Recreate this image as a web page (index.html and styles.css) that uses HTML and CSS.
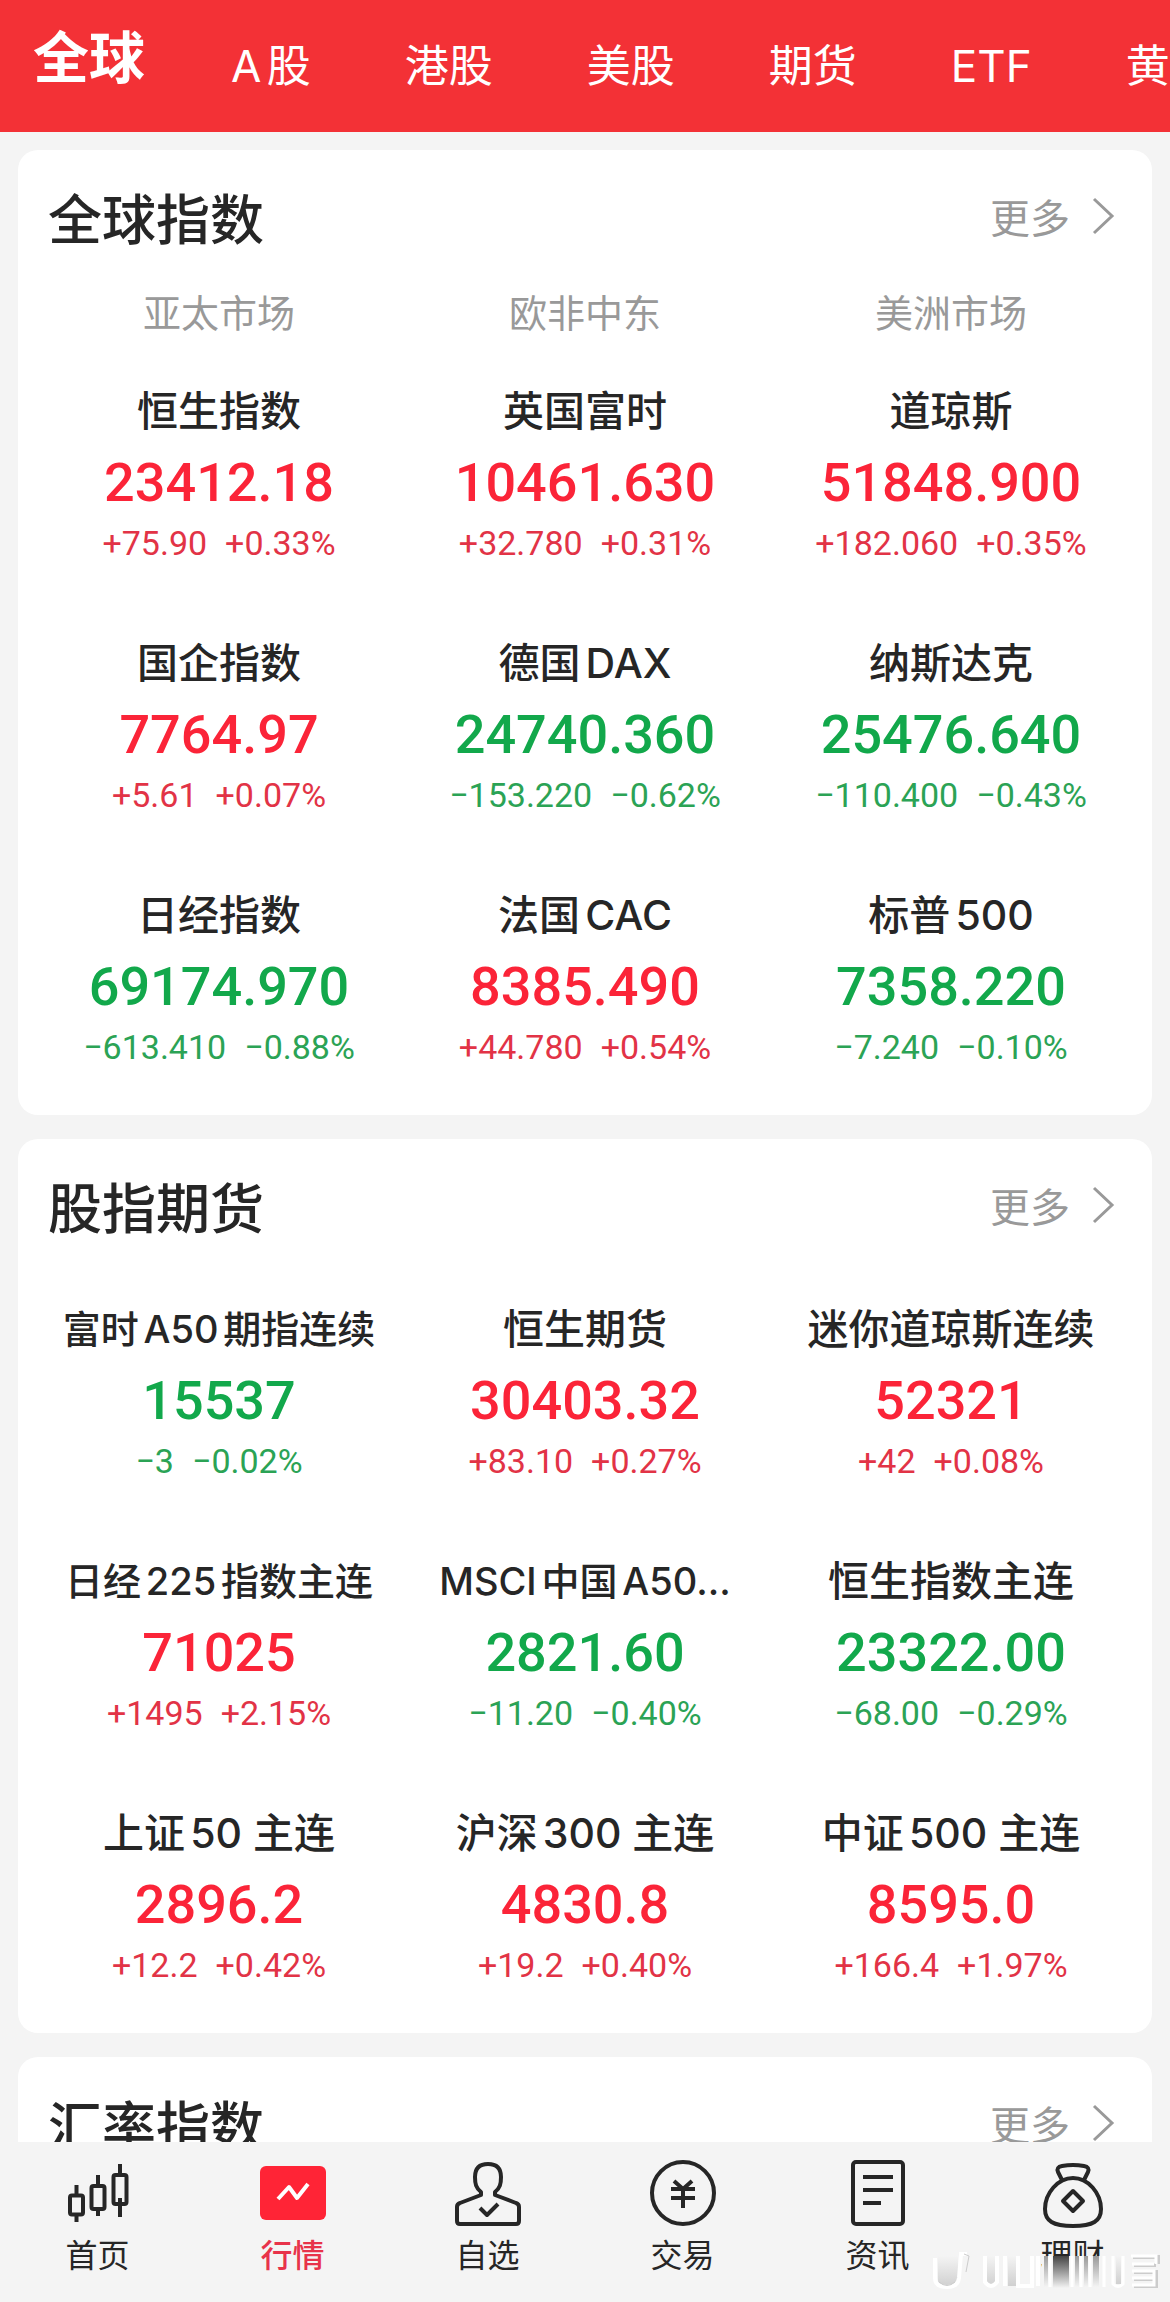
FILE: index.html
```html
<!DOCTYPE html>
<html lang="zh-CN">
  <head>
    <meta charset="UTF-8">
    <meta name="viewport" content="width=device-width, initial-scale=1.0">
    <title>全球行情</title>
    <link rel="stylesheet" href="styles.css">
  </head>
  <body>
    <nav class="top-nav">
      <a class="active" href="#">全球</a>
      <a href="#">A股</a>
      <a href="#">港股</a>
      <a href="#">美股</a>
      <a href="#">期货</a>
      <a href="#">ETF</a>
      <a href="#">黄金</a>
    </nav>

    <main>
      <!-- 全球指数 -->
      <section class="card">
        <header>
          <h2>全球指数</h2>
          <a class="more" href="#">更多
            <svg viewBox="0 0 24 42"><path d="M2 4l18 17L2 38"/></svg>
          </a>
        </header>
        <div class="markets">
          <span>亚太市场</span>
          <span>欧非中东</span>
          <span>美洲市场</span>
        </div>
        <div class="grid">
          <div class="item up">
            <h3>恒生指数</h3>
            <strong>23412.18</strong>
            <p><span>+75.90</span><span>+0.33%</span></p>
          </div>
          <div class="item up">
            <h3>英国富时</h3>
            <strong>10461.630</strong>
            <p><span>+32.780</span><span>+0.31%</span></p>
          </div>
          <div class="item up">
            <h3>道琼斯</h3>
            <strong>51848.900</strong>
            <p><span>+182.060</span><span>+0.35%</span></p>
          </div>
          <div class="item up">
            <h3>国企指数</h3>
            <strong>7764.97</strong>
            <p><span>+5.61</span><span>+0.07%</span></p>
          </div>
          <div class="item down">
            <h3>德国DAX</h3>
            <strong>24740.360</strong>
            <p><span>−153.220</span><span>−0.62%</span></p>
          </div>
          <div class="item down">
            <h3>纳斯达克</h3>
            <strong>25476.640</strong>
            <p><span>−110.400</span><span>−0.43%</span></p>
          </div>
          <div class="item down">
            <h3>日经指数</h3>
            <strong>69174.970</strong>
            <p><span>−613.410</span><span>−0.88%</span></p>
          </div>
          <div class="item up">
            <h3>法国CAC</h3>
            <strong>8385.490</strong>
            <p><span>+44.780</span><span>+0.54%</span></p>
          </div>
          <div class="item down">
            <h3>标普500</h3>
            <strong>7358.220</strong>
            <p><span>−7.240</span><span>−0.10%</span></p>
          </div>
        </div>
      </section>

      <!-- 股指期货 -->
      <section class="card">
        <header>
          <h2>股指期货</h2>
          <a class="more" href="#">更多
            <svg viewBox="0 0 24 42"><path d="M2 4l18 17L2 38"/></svg>
          </a>
        </header>
        <div class="grid futures">
          <div class="item down">
            <h3 class="long">富时A50期指连续</h3>
            <strong>15537</strong>
            <p><span>−3</span><span>−0.02%</span></p>
          </div>
          <div class="item up">
            <h3>恒生期货</h3>
            <strong>30403.32</strong>
            <p><span>+83.10</span><span>+0.27%</span></p>
          </div>
          <div class="item up">
            <h3>迷你道琼斯连续</h3>
            <strong>52321</strong>
            <p><span>+42</span><span>+0.08%</span></p>
          </div>
          <div class="item up">
            <h3 class="long">日经225指数主连</h3>
            <strong>71025</strong>
            <p><span>+1495</span><span>+2.15%</span></p>
          </div>
          <div class="item down">
            <h3 class="long">MSCI中国A50...</h3>
            <strong>2821.60</strong>
            <p><span>−11.20</span><span>−0.40%</span></p>
          </div>
          <div class="item down">
            <h3>恒生指数主连</h3>
            <strong>23322.00</strong>
            <p><span>−68.00</span><span>−0.29%</span></p>
          </div>
          <div class="item up">
            <h3>上证50 主连</h3>
            <strong>2896.2</strong>
            <p><span>+12.2</span><span>+0.42%</span></p>
          </div>
          <div class="item up">
            <h3>沪深300 主连</h3>
            <strong>4830.8</strong>
            <p><span>+19.2</span><span>+0.40%</span></p>
          </div>
          <div class="item up">
            <h3>中证500 主连</h3>
            <strong>8595.0</strong>
            <p><span>+166.4</span><span>+1.97%</span></p>
          </div>
        </div>
      </section>

      <!-- 汇率指数 -->
      <section class="card">
        <header>
          <h2>汇率指数</h2>
          <a class="more" href="#">更多
            <svg viewBox="0 0 24 42"><path d="M2 4l18 17L2 38"/></svg>
          </a>
        </header>
      </section>
    </main>

    <nav class="tab-bar">
      <a href="#">
        <svg viewBox="0 0 66 66">
          <path d="M11.500 25v10M11.500 55v7M33 15v10M33 49v7M55 4v11M55 38v19"/>
          <rect x="5" y="35.500" width="13" height="19" rx="2"/>
          <rect x="26.500" y="26" width="13" height="23" rx="2"/>
          <rect x="48.500" y="15" width="13" height="29" rx="2"/>
          <path d="M55 44v13"/>
        </svg>
        首页
      </a>
      <a class="active" href="#">
        <svg viewBox="0 0 66 66">
          <rect x="0" y="6" width="66" height="54" rx="6" class="block"/>
          <path d="M18 39l11-12 8 11 11-14" class="line"/>
        </svg>
        行情
      </a>
      <a href="#">
        <svg viewBox="0 0 66 66">
          <path d="M26 32C21 28 20 24 20 17c0-9 5-13 13-13s13 4 13 13c0 7-1 11-6 15v3l21 8q3 1 3 4v14q0 3-3 3H5q-3 0-3-3V47q0-3 3-4l21-8z" class="body"/>
          <path d="M25 48l7 7 11-11"/>
        </svg>
        自选
      </a>
      <a href="#">
        <svg viewBox="0 0 66 66">
          <circle cx="33" cy="33" r="31"/>
          <path d="M24 21l9 8 9-8M21 29h24M21 38h24M33 29v19"/>
        </svg>
        交易
      </a>
      <a href="#">
        <svg viewBox="0 0 66 66">
          <rect x="8" y="2" width="50" height="62" rx="3"/>
          <path d="M18 17h30M18 30h30M18 43h18"/>
        </svg>
        资讯
      </a>
      <a href="#">
        <svg viewBox="0 0 66 66">
          <path d="M22 20l-4-8q-2-5 4-6 11-2 22 0 6 1 4 6l-4 8"/>
          <path d="M33 18C18 18 5 33 5 49c0 12 8 17 28 17s28-5 28-17C61 33 48 18 33 18z"/>
          <path d="M33 31l10 10-10 10-10-10z"/>
        </svg>
        理财
      </a>
    </nav>

    <!-- 右下角水印 -->
    <svg class="watermark" viewBox="0 0 236 40" aria-hidden="true">
      <defs>
        <linearGradient id="dark" x2="0" y2="1">
          <stop offset="0" stop-color="#444"/>
          <stop offset="1" stop-color="#f4f4f4"/>
        </linearGradient>
        <linearGradient id="mid" x2="0" y2="1">
          <stop offset="0" stop-color="#999"/>
          <stop offset="1" stop-color="#f4f4f4"/>
        </linearGradient>
        <linearGradient id="pale" x2="0" y2="1">
          <stop offset="0" stop-color="#f4f4f4"/>
          <stop offset="1" stop-color="#d0d0d0"/>
        </linearGradient>
      </defs>
      <path d="M112 4h80v32h-80z" fill="#f4f4f4"/>
      <path d="M8 4h20v28q-10 5-20 0z" fill="url(#pale)"/>
      <path d="M5 6v20q0 9 12 9 11 0 12-9l2-24h6" stroke="#fff" stroke-width="4"/>
      <path d="M9 30q8 7 16 0M34 2l5 2-3 16" stroke="#ccc"/>
      <path d="M57 4h9v30h-9zM78 4h8v30h-8z" fill="url(#pale)"/>
      <path d="M55 4v26q6 8 12 0V4M75 4v30M88 4v30h14V4M108 4v30" stroke="#fff" stroke-width="4"/>
      <path d="M114 4h4v31h-4zM145 4h4v31h-4zM154 4h4v31h-4zM163 4h6v31h-6z" fill="url(#mid)"/>
      <path d="M123 4h16v32h-16z" fill="url(#dark)"/>
      <path d="M120 4v31M142 4v31M151 4v31M160 4v31M174 4v31M183 4v28q5 5 10 0V4" stroke="#fff" stroke-width="3"/>
      <path d="M186 4h5v28h-5z" fill="url(#pale)"/>
      <path d="M203 5h25v7M204 13h22M204 20h22v14h-22M204 27h22" stroke="#ccc" stroke-width="4"/>
      <path d="M201 4h25v8M202 12h22M202 19h22v14h-22M202 26h22" stroke="#fff" stroke-width="3"/>
    </svg>
  </body>
</html>
```
FILE: styles.css
```css
* {
  box-sizing: border-box;
}

html, body {
  height: 100%;
  margin: 0;
}

body {
  display: flex;
  flex-direction: column;
  background-color: #f4f4f4;
  color: #262626;
  font-family: Inter, "Noto Sans CJK SC", sans-serif;
  text-autospace: normal;
}

a {
  color: inherit;
  text-decoration: none;
}

h2, h3, p {
  margin: 0;
}

svg {
  display: block;
  fill: none;
  stroke: currentColor;
}

/* 顶部导航 */
.top-nav {
  display: flex;
  flex-shrink: 0;
  gap: 94px;
  padding-left: 33px;
  overflow: hidden;
  background-color: #f33136;
  color: #fff;
  font-size: 44px;
  line-height: 132px;
  white-space: nowrap;
}

.top-nav .active {
  margin-right: -8px;
  font-size: 56px;
  font-weight: bold;
  line-height: 116px;
}

.top-nav a {
  flex-shrink: 0;
}

main {
  flex: 1;
  min-height: 0;
  padding: 18px 18px 0;
  overflow-y: auto;
  scrollbar-width: none;
}

.card {
  margin-bottom: 24px;
  padding: 0 18px 50px;
  background-color: #fff;
  border-radius: 20px;
}

.card header {
  display: flex;
  justify-content: space-between;
  align-items: center;
  height: 136px;
  padding: 0 18px 4px 12px;
}

.card h2 {
  font-size: 54px;
  font-weight: 500;
}

.more {
  display: flex;
  align-items: center;
  gap: 22px;
  color: #999;
  font-size: 40px;
}

.more svg {
  width: 24px;
  height: 42px;
  stroke-width: 3;
}

.markets, .grid {
  display: grid;
  grid-template-columns: repeat(3, 1fr);
  text-align: center;
}

.markets {
  margin-bottom: 41px;
  color: #999;
  font-size: 38px;
  line-height: 54px;
}

.grid {
  row-gap: 72px;
}

.futures {
  padding-top: 24px;
}

.item h3 {
  font-size: 41px;
  font-weight: 500;
  line-height: 60px;
  white-space: nowrap;
}

.item .long {
  font-size: 38px;
}

.item strong {
  display: block;
  font-family: Roboto, sans-serif;
  font-size: 54px;
  font-weight: 500;
  line-height: 84px;
}

.item p {
  display: flex;
  justify-content: center;
  gap: 18px;
  font-family: Roboto, sans-serif;
  font-size: 34px;
  line-height: 36px;
}

.up strong {
  color: #fb2438;
}

.up p {
  color: #e23346;
}

.down strong {
  color: #12a84b;
}

.down p {
  color: #2ba355;
}

/* 底部标签栏 */
.tab-bar {
  display: grid;
  grid-template-columns: repeat(6, 1fr);
  flex-shrink: 0;
  height: 160px;
  padding-top: 18px;
  background-color: #f4f4f4;
  font-size: 32px;
  line-height: 44px;
}

.tab-bar a {
  display: flex;
  flex-direction: column;
  align-items: center;
  gap: 8px;
}

.tab-bar svg {
  width: 66px;
  height: 66px;
  overflow: visible;
  stroke-width: 4;
  stroke-linejoin: round;
}

.tab-bar .active {
  color: #e8334a;
  font-weight: 500;
}

.tab-bar .block {
  fill: #ff2436;
  stroke: none;
}

.tab-bar .line {
  stroke: #fff;
}

/* 水印浮在标签栏上方 */
.watermark {
  position: absolute;
  right: 4px;
  bottom: 10px;
  width: 236px;
  height: 40px;
  stroke: none;
  pointer-events: none;
}
```
